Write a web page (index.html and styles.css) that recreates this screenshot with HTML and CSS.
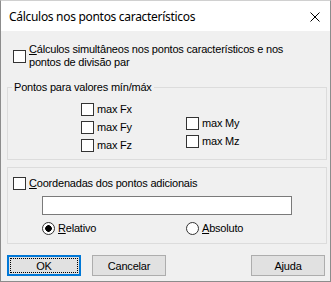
FILE: index.html
```html
<!DOCTYPE html>
<html lang="pt">
  <head>
    <meta charset="UTF-8" />
    <title>Cálculos nos pontos característicos</title>
    <link rel="stylesheet" href="styles.css">
  </head>
  <body>
    <div class="dialog">
      <div class="titlebar">
        <span class="title">Cálculos nos pontos característicos</span>
        <svg class="close" width="10" height="10" viewBox="0 0 10 10">
          <path d="M0.5 0.5 L9.5 9.5 M9.5 0.5 L0.5 9.5" stroke="#000" stroke-width="1" fill="none" />
        </svg>
      </div>

      <div class="content">
        <label class="check top-check">
          <input type="checkbox" />
          <span><u>C</u>álculos simultâneos nos pontos característicos e nos<br />pontos de divisão par</span>
        </label>

        <fieldset class="group minmax">
          <legend>Pontos para valores mín/máx</legend>
          <div class="col col-f">
            <label class="check row"><input type="checkbox" /><span>max Fx</span></label>
            <label class="check row"><input type="checkbox" /><span>max Fy</span></label>
            <label class="check row"><input type="checkbox" /><span>max Fz</span></label>
          </div>
          <div class="col col-m">
            <label class="check row"><input type="checkbox" /><span>max My</span></label>
            <label class="check row"><input type="checkbox" /><span>max Mz</span></label>
          </div>
        </fieldset>

        <div class="group extra">
          <label class="check row coord-check">
            <input type="checkbox" />
            <span><u>C</u>oordenadas dos pontos adicionais</span>
          </label>
          <input class="text-field" type="text" />
          <div class="radios">
            <label class="check row radio-rel"><input type="radio" name="mode" checked /><span><u>R</u>elativo</span></label>
            <label class="check row"><input type="radio" name="mode" /><span><u>A</u>bsoluto</span></label>
          </div>
        </div>

        <div class="buttons">
          <button class="btn default">OK</button>
          <button class="btn">Cancelar</button>
          <span class="spacer"></span>
          <button class="btn">Ajuda</button>
        </div>
      </div>
    </div>
  </body>
</html>
```

FILE: styles.css
```css
* {
  margin: 0;
  padding: 0;
  box-sizing: border-box;
}

body {
  background-color: #f0f0f0;
  font-family: "Liberation Sans", Arial, sans-serif;
  font-size: 11px;
  letter-spacing: -0.2px;
  color: #000;
}

.dialog {
  width: 331px;
  height: 282px;
  border: 1px solid #8c8c8c;
  border-top-color: #d0d0d0;
  background-color: #f0f0f0;
  display: flex;
  flex-direction: column;
}

.titlebar {
  height: 30px;
  background-color: #fff;
  display: flex;
  align-items: center;
  padding: 0 10px 0 8px;
}

.title {
  flex: 1;
  font-family: "Noto Sans", sans-serif;
  font-size: 12px;
  letter-spacing: -0.3px;
}

.close {
  margin-top: 1px;
}

.content {
  flex: 1;
  padding: 12px 0 0 6px;
}

.check {
  display: flex;
  align-items: center;
  gap: 3px;
  line-height: 13px;
}

.check input {
  appearance: none;
  width: 13px;
  height: 13px;
  border: 1px solid #333;
  background-color: #fff;
  flex: none;
}

.check input[type="radio"] {
  border-radius: 50%;
}

.check input[type="radio"]:checked {
  background: radial-gradient(circle, #000 0 3px, #fff 3.6px);
}

.top-check {
  margin-left: 6px;
  height: 26px;
}

.group {
  width: 320px;
  border: 1px solid #dcdcdc;
}

.minmax {
  margin-top: 12px;
  height: 79px;
  display: flex;
  align-items: flex-start;
}

.minmax legend {
  margin-left: 4px;
  padding: 0 2px;
  line-height: 13px;
}

.row {
  height: 18px;
}

.col-f {
  width: 105px;
  margin: 6px 0 0 73px;
}

.col-m {
  margin-top: 20px;
}

.extra {
  margin-top: 7px;
  height: 77px;
  padding: 8px 0 0 5px;
}

.coord-check {
  height: 15px;
}

.text-field {
  display: block;
  width: 250px;
  height: 19px;
  margin: 5px 0 0 29px;
  border: 1px solid #7a7a7a;
  background-color: #fff;
}

.radios {
  display: flex;
  margin: 6px 0 0 29px;
}

.radios .row {
  height: 15px;
}

.radio-rel {
  width: 144px;
}

.buttons {
  display: flex;
  gap: 11px;
  margin-top: 11px;
  width: 318px;
}

.spacer {
  flex: 1;
}

.btn {
  width: 74px;
  height: 21px;
  font-family: "Liberation Sans", Arial, sans-serif;
  font-size: 11px;
  letter-spacing: -0.2px;
  color: #000;
  background-color: #e1e1e1;
  border: 1px solid #adadad;
}

.btn.default {
  border: 2px solid #0078d7;
  outline: 1px dotted #000;
  outline-offset: -4px;
}
```
